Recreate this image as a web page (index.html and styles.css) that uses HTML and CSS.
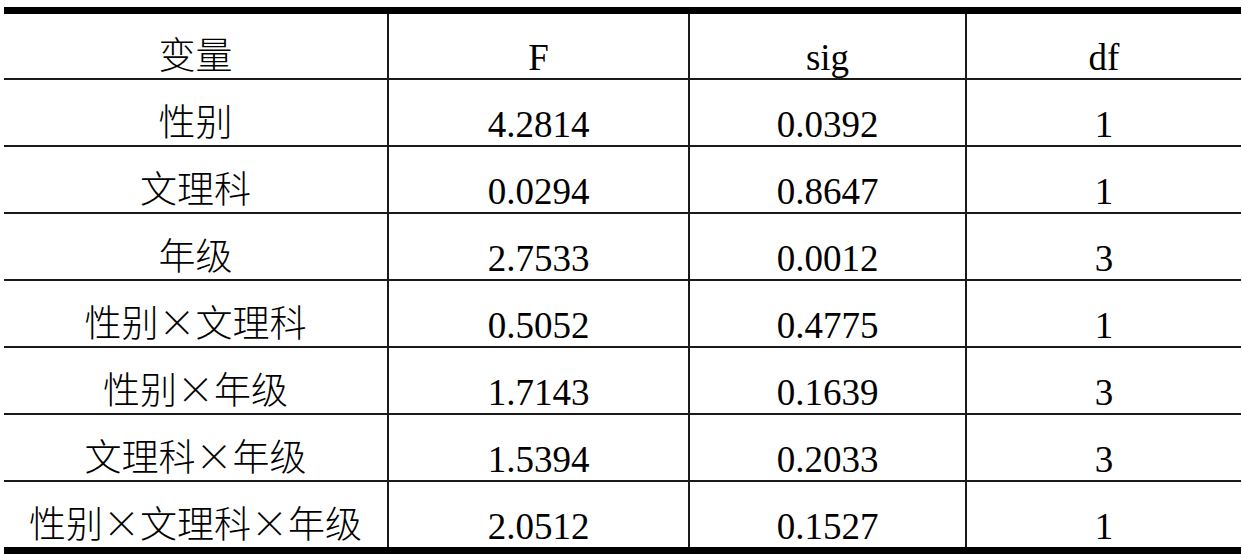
FILE: index.html
```html
<!DOCTYPE html>
<html lang="zh-CN">
<head>
<meta charset="utf-8">
<title>方差分析结果</title>
<link rel="stylesheet" href="styles.css">
</head>
<body>
<table class="stats">
  <colgroup>
    <col class="c1"><col class="c2"><col class="c3"><col class="c4">
  </colgroup>
  <thead>
    <tr><th><span class="zh">变量</span></th><th>F</th><th>sig</th><th>df</th></tr>
  </thead>
  <tbody>
    <tr><td><span class="zh">性别</span></td><td>4.2814</td><td>0.0392</td><td>1</td></tr>
    <tr><td><span class="zh">文理科</span></td><td>0.0294</td><td>0.8647</td><td>1</td></tr>
    <tr><td><span class="zh">年级</span></td><td>2.7533</td><td>0.0012</td><td>3</td></tr>
    <tr><td><span class="zh">性别<span class="x">×</span>文理科</span></td><td>0.5052</td><td>0.4775</td><td>1</td></tr>
    <tr><td><span class="zh">性别<span class="x">×</span>年级</span></td><td>1.7143</td><td>0.1639</td><td>3</td></tr>
    <tr><td><span class="zh">文理科<span class="x">×</span>年级</span></td><td>1.5394</td><td>0.2033</td><td>3</td></tr>
    <tr><td><span class="zh">性别<span class="x">×</span>文理科<span class="x">×</span>年级</span></td><td>2.0512</td><td>0.1527</td><td>1</td></tr>
  </tbody>
</table>
</body>
</html>
```
FILE: styles.css
```css
html, body {
  margin: 0;
  padding: 0;
  background: #fff;
}

body {
  padding: 7px 0 0 4px;
}

.stats {
  width: 1237px;
  border-collapse: separate;
  border-spacing: 0;
  table-layout: fixed;
  border-top: 7px solid #000;
  border-bottom: 7px solid #000;
  font-family: "Liberation Serif", "Noto Sans CJK SC", serif;
  font-size: 37px;
  color: #000;
}

.c1 { width: 385px; }
.c2 { width: 301px; }
.c3 { width: 277px; }
.c4 { width: 274px; }

.stats th,
.stats td {
  font-weight: normal;
  text-align: center;
  vertical-align: bottom;
  line-height: 37px;
  padding: 0 0 2px 0;
  height: 63px;
  border-right: 2px solid #1a1a1a;
  border-bottom: 2px solid #1a1a1a;
  box-sizing: content-box;
}

.stats th {
  height: 62px;
}

.stats th:last-child,
.stats td:last-child {
  border-right: none;
}

.stats tbody tr:last-child td {
  border-bottom: none;
}

.zh {
  font-family: "Noto Sans CJK SC", sans-serif;
  font-weight: 300;
  position: relative;
  top: -1px;
}

.x {
  font-family: "Noto Sans CJK SC", sans-serif;
  font-weight: 200;
}
```
